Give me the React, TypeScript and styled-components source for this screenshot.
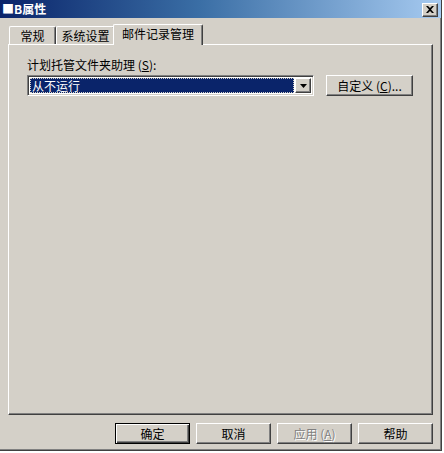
import React from "react";
import styled, { createGlobalStyle, css } from "styled-components";

const face = "#d4d0c8";
const shadow = "#808080";
const dark = "#404040";

const GlobalStyle = createGlobalStyle`
  html, body {
    margin: 0;
    padding: 0;
    background: #ffffff;
  }
  body {
    font-family: "Noto Sans CJK SC", "Noto Sans", sans-serif;
    font-size: 12px;
    color: #000;
  }
`;

const Window = styled.div`
  width: 442px;
  height: 451px;
  box-sizing: border-box;
  background: ${face};
  border-right: 1px solid ${dark};
  border-bottom: 1px solid ${dark};
  box-shadow: inset -1px -1px 0 ${shadow};
  display: flex;
  flex-direction: column;
`;

const TitleBar = styled.div`
  height: 18px;
  background: linear-gradient(to right, #0a246a 0%, #3a6ea5 45%, #a6caf0 100%);
  display: flex;
  align-items: center;
  justify-content: space-between;
  padding: 0 3px 0 2px;
  box-sizing: border-box;
`;

const Title = styled.span`
  color: #fff;
  font-weight: bold;
  font-size: 12px;
  line-height: 18px;
  letter-spacing: 0;
`;

const raised = css`
  background: ${face};
  border-top: 1px solid #fff;
  border-left: 1px solid #fff;
  border-right: 1px solid ${dark};
  border-bottom: 1px solid ${dark};
  box-shadow: inset -1px -1px 0 ${shadow};
  box-sizing: border-box;
`;

const CloseButton = styled.div`
  ${raised};
  width: 16px;
  height: 14px;
  display: flex;
  align-items: center;
  justify-content: center;
  margin-top: 1px;
`;

const Content = styled.div`
  flex: 1;
  display: flex;
  flex-direction: column;
  padding: 6px 0 0 8px;
`;

const TabStrip = styled.div`
  display: flex;
  align-items: flex-end;
  height: 21px;
  padding-left: 1px;
  position: relative;
  z-index: 1;
`;

const Tab = styled.div<{ $w: number; $active?: boolean }>`
  width: ${(p) => p.$w}px;
  height: ${(p) => (p.$active ? 21 : 18)}px;
  margin: ${(p) => (p.$active ? "0 -2px 0 -2px" : "0 0 1px 0")};
  box-sizing: border-box;
  background: ${face};
  border-top: 1px solid #fff;
  border-left: 1px solid #fff;
  border-right: 1px solid ${dark};
  border-top-left-radius: 2px;
  border-top-right-radius: 2px;
  box-shadow: inset -1px 0 0 ${shadow};
  display: flex;
  align-items: ${(p) => (p.$active ? "flex-start" : "center")};
  padding-top: ${(p) => (p.$active ? 2 : 0)}px;
  justify-content: center;
  line-height: 14px;
  position: relative;
  z-index: ${(p) => (p.$active ? 2 : 1)};
`;

const Panel = styled.div`
  width: 425px;
  height: 371px;
  box-sizing: border-box;
  margin-top: -1px;
  border-top: 1px solid #fff;
  border-left: 1px solid #fff;
  border-right: 1px solid ${dark};
  border-bottom: 1px solid ${dark};
  box-shadow: inset -1px -1px 0 ${shadow};
  padding: 12px 0 0 18px;
  display: flex;
  flex-direction: column;
  gap: 3px;
`;

const Label = styled.div`
  line-height: 15px;
`;

const Row = styled.div`
  display: flex;
  align-items: center;
  gap: 12px;
`;

const Combo = styled.div`
  width: 287px;
  height: 21px;
  box-sizing: border-box;
  background: #fff;
  border-top: 1px solid ${shadow};
  border-left: 1px solid ${shadow};
  border-right: 1px solid #fff;
  border-bottom: 1px solid #fff;
  box-shadow: inset 1px 1px 0 ${dark}, inset -1px -1px 0 ${face};
  padding: 2px;
  display: flex;
  gap: 1px;
`;

const Selected = styled.div`
  flex: 1;
  background: #0a246a;
  color: #fff;
  outline: 1px dotted #d4d0c8;
  outline-offset: -1px;
  padding-left: 2px;
  line-height: 15px;
`;

const DropButton = styled.div`
  ${raised};
  width: 16px;
  display: flex;
  align-items: center;
  justify-content: center;
`;

const Button = styled.div<{ $default?: boolean; $disabled?: boolean; $w?: number }>`
  ${raised};
  width: ${(p) => p.$w ?? 75}px;
  height: 21px;
  display: flex;
  align-items: center;
  justify-content: center;
  line-height: 14px;
  ${(p) =>
    p.$default &&
    css`
      border: 1px solid #000;
      box-shadow: inset 1px 1px 0 #fff, inset -1px -1px 0 ${dark}, inset -2px -2px 0 ${shadow};
    `}
  ${(p) =>
    p.$disabled &&
    css`
      color: ${shadow};
      text-shadow: 1px 1px 0 #fff;
    `}
`;

const Footer = styled.div`
  display: flex;
  justify-content: flex-end;
  gap: 6px;
  padding: 8px 0 0 0;
  width: 425px;
`;

const Key = styled.u`
  text-underline-offset: 1px;
`;

export default function App() {
  return (
    <>
      <GlobalStyle />
      <Window>
        <TitleBar>
          <Title>■B属性</Title>
          <CloseButton>
            <svg width="8" height="7" viewBox="0 0 8 7">
              <path d="M0 0h2l2 2 2-2h2L5 3.5 8 7H6L4 5 2 7H0l3-3.5z" fill="#000" />
            </svg>
          </CloseButton>
        </TitleBar>
        <Content>
          <TabStrip>
            <Tab $w={47}>常规</Tab>
            <Tab $w={59}>系统设置</Tab>
            <Tab $w={90} $active>邮件记录管理</Tab>
          </TabStrip>
          <Panel>
            <Label>
              计划托管文件夹助理 (<Key>S</Key>):
            </Label>
            <Row>
              <Combo>
                <Selected>从不运行</Selected>
                <DropButton>
                  <svg width="7" height="4" viewBox="0 0 7 4">
                    <path d="M0 0h7L3.5 4z" fill="#000" />
                  </svg>
                </DropButton>
              </Combo>
              <Button $w={87}>
                自定义 (<Key>C</Key>)...
              </Button>
            </Row>
          </Panel>
          <Footer>
            <Button $default>确定</Button>
            <Button>取消</Button>
            <Button $disabled>
              应用 (<Key>A</Key>)
            </Button>
            <Button>帮助</Button>
          </Footer>
        </Content>
      </Window>
    </>
  );
}
